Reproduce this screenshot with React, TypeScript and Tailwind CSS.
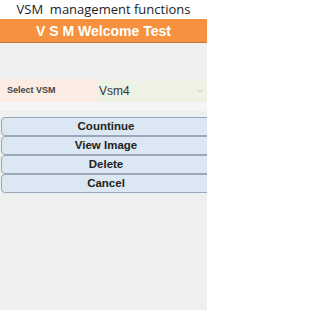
import { ChevronDown } from "lucide-react";

const buttons = ["Countinue", "View Image", "Delete", "Cancel"];

export default function App() {
  return (
    <div className="w-[207px] h-[310px] overflow-hidden bg-[#eeefef] font-['Liberation_Sans',Arial,sans-serif]">
      {/* page title */}
      <div className="h-[19px] bg-white flex items-center justify-center">
        <span className="font-['Open_Sans',sans-serif] text-[13px] leading-none text-[#222] whitespace-nowrap">VSM&nbsp; management functions</span>
      </div>

      {/* orange header */}
      <div className="h-[24px] bg-[#f6923f] border-b border-[#c8763a] flex items-center justify-center">
        <span className="text-white font-bold text-[14px] leading-none">V S M Welcome Test</span>
      </div>

      <div className="h-[36px]" />

      {/* select row */}
      <div className="flex h-[23px]">
        <div className="w-[97px] bg-[#fcede4] flex items-center pl-[7px]">
          <span className="text-[9px] font-bold text-[#444]">Select VSM</span>
        </div>
        <div className="flex-1 bg-[#eef2e4] flex items-center justify-between pl-[2px] pr-[3px]">
          <span className="text-[12px] text-[#333]">Vsm4</span>
          <ChevronDown className="w-[8px] h-[8px] text-[#c4cabb]" strokeWidth={3} />
        </div>
      </div>
      <div className="h-[9px] bg-[#f5f5f7]" />

      <div className="h-[6px]" />

      {/* action buttons */}
      <div className="flex flex-col pl-[1px] -mr-[4px]">
        {buttons.map((b) => (
          <button
            key={b}
            className="h-[19px] bg-[#dce7f4] border border-[#9aa7b6] rounded-[4px] flex items-center justify-center text-[11.5px] font-bold text-[#222] leading-none"
          >
            {b}
          </button>
        ))}
      </div>
    </div>
  );
}
